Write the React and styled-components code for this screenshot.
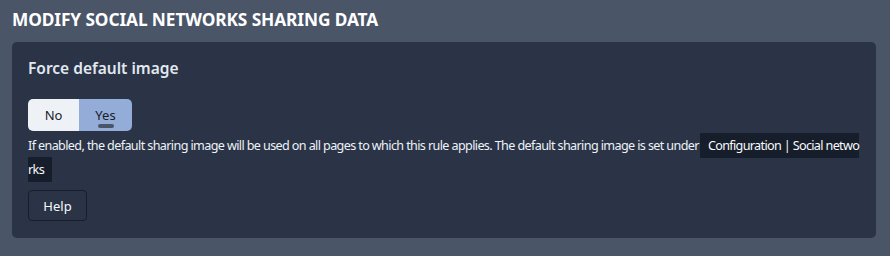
import React from 'react'
import styled, { createGlobalStyle } from 'styled-components'

const GlobalStyle = createGlobalStyle`
  html, body {
    margin: 0;
    padding: 0;
    background: #4a5568;
  }
  body {
    font-family: "Noto Sans", "Open Sans", sans-serif;
    color: #f7fafc;
  }
`

const Page = styled.div`
  padding: 8px 14px 18px 12px;
`

const Title = styled.h1`
  margin: 0 0 11px 0;
  font-size: 17.3px;
  font-weight: 700;
  line-height: 23px;
  color: #ffffff;
  letter-spacing: -0.1px;
`

const Card = styled.div`
  background: #2a3446;
  border-radius: 5px;
  padding: 16px 16px 17px 16px;
`

const FieldTitle = styled.h2`
  margin: 0 0 21px 0;
  font-size: 15.5px;
  font-weight: 600;
  line-height: 20px;
  color: #e2e8f0;
`

const Toggle = styled.div`
  display: inline-flex;
  vertical-align: top;
  border-radius: 5px;
  overflow: hidden;
  height: 32px;
`

const ToggleOption = styled.button`
  position: relative;
  border: none;
  margin: 0;
  font-family: inherit;
  font-size: 13px;
  cursor: pointer;
  width: ${p => p.$w}px;
  padding: 0;
  color: #1a202c;
  background: ${p => (p.$active ? '#93acd8' : '#eef2f7')};

  &::after {
    content: '';
    display: ${p => (p.$active ? 'block' : 'none')};
    position: absolute;
    left: 50%;
    bottom: 3px;
    width: 16px;
    height: 4px;
    margin-left: -8px;
    border-radius: 2px;
    background: #4a5568;
  }
`

const Description = styled.p`
  margin: 3px 0 8px 0;
  font-size: 12.6px;
  letter-spacing: -0.62px;
  line-height: 24px;
  color: #edf2f7;
`

const Code = styled.code`
  font-family: inherit;
  letter-spacing: -0.65px;
  background: #171e2b;
  color: #f7fafc;
  padding: 4px 8px;
  margin-left: 1px;
  word-break: break-all;
`

const HelpButton = styled.button`
  display: block;
  width: 59px;
  height: 31px;
  border: 1px solid #171e2b;
  border-radius: 4px;
  background: transparent;
  color: #f7fafc;
  font-family: inherit;
  font-size: 13px;
  cursor: pointer;
`

export default function App() {
  return (
    <>
      <GlobalStyle />
      <Page>
        <Title>MODIFY SOCIAL NETWORKS SHARING DATA</Title>
        <Card>
          <FieldTitle>Force default image</FieldTitle>
          <Toggle>
            <ToggleOption $w={51}>No</ToggleOption>
            <ToggleOption $w={53} $active>Yes</ToggleOption>
          </Toggle>
          <Description>
            If enabled, the default sharing image will be used on all pages to which this rule applies. The default sharing image is set under
            <Code>Configuration | Social networks</Code>
          </Description>
          <HelpButton>Help</HelpButton>
        </Card>
      </Page>
    </>
  )
}
